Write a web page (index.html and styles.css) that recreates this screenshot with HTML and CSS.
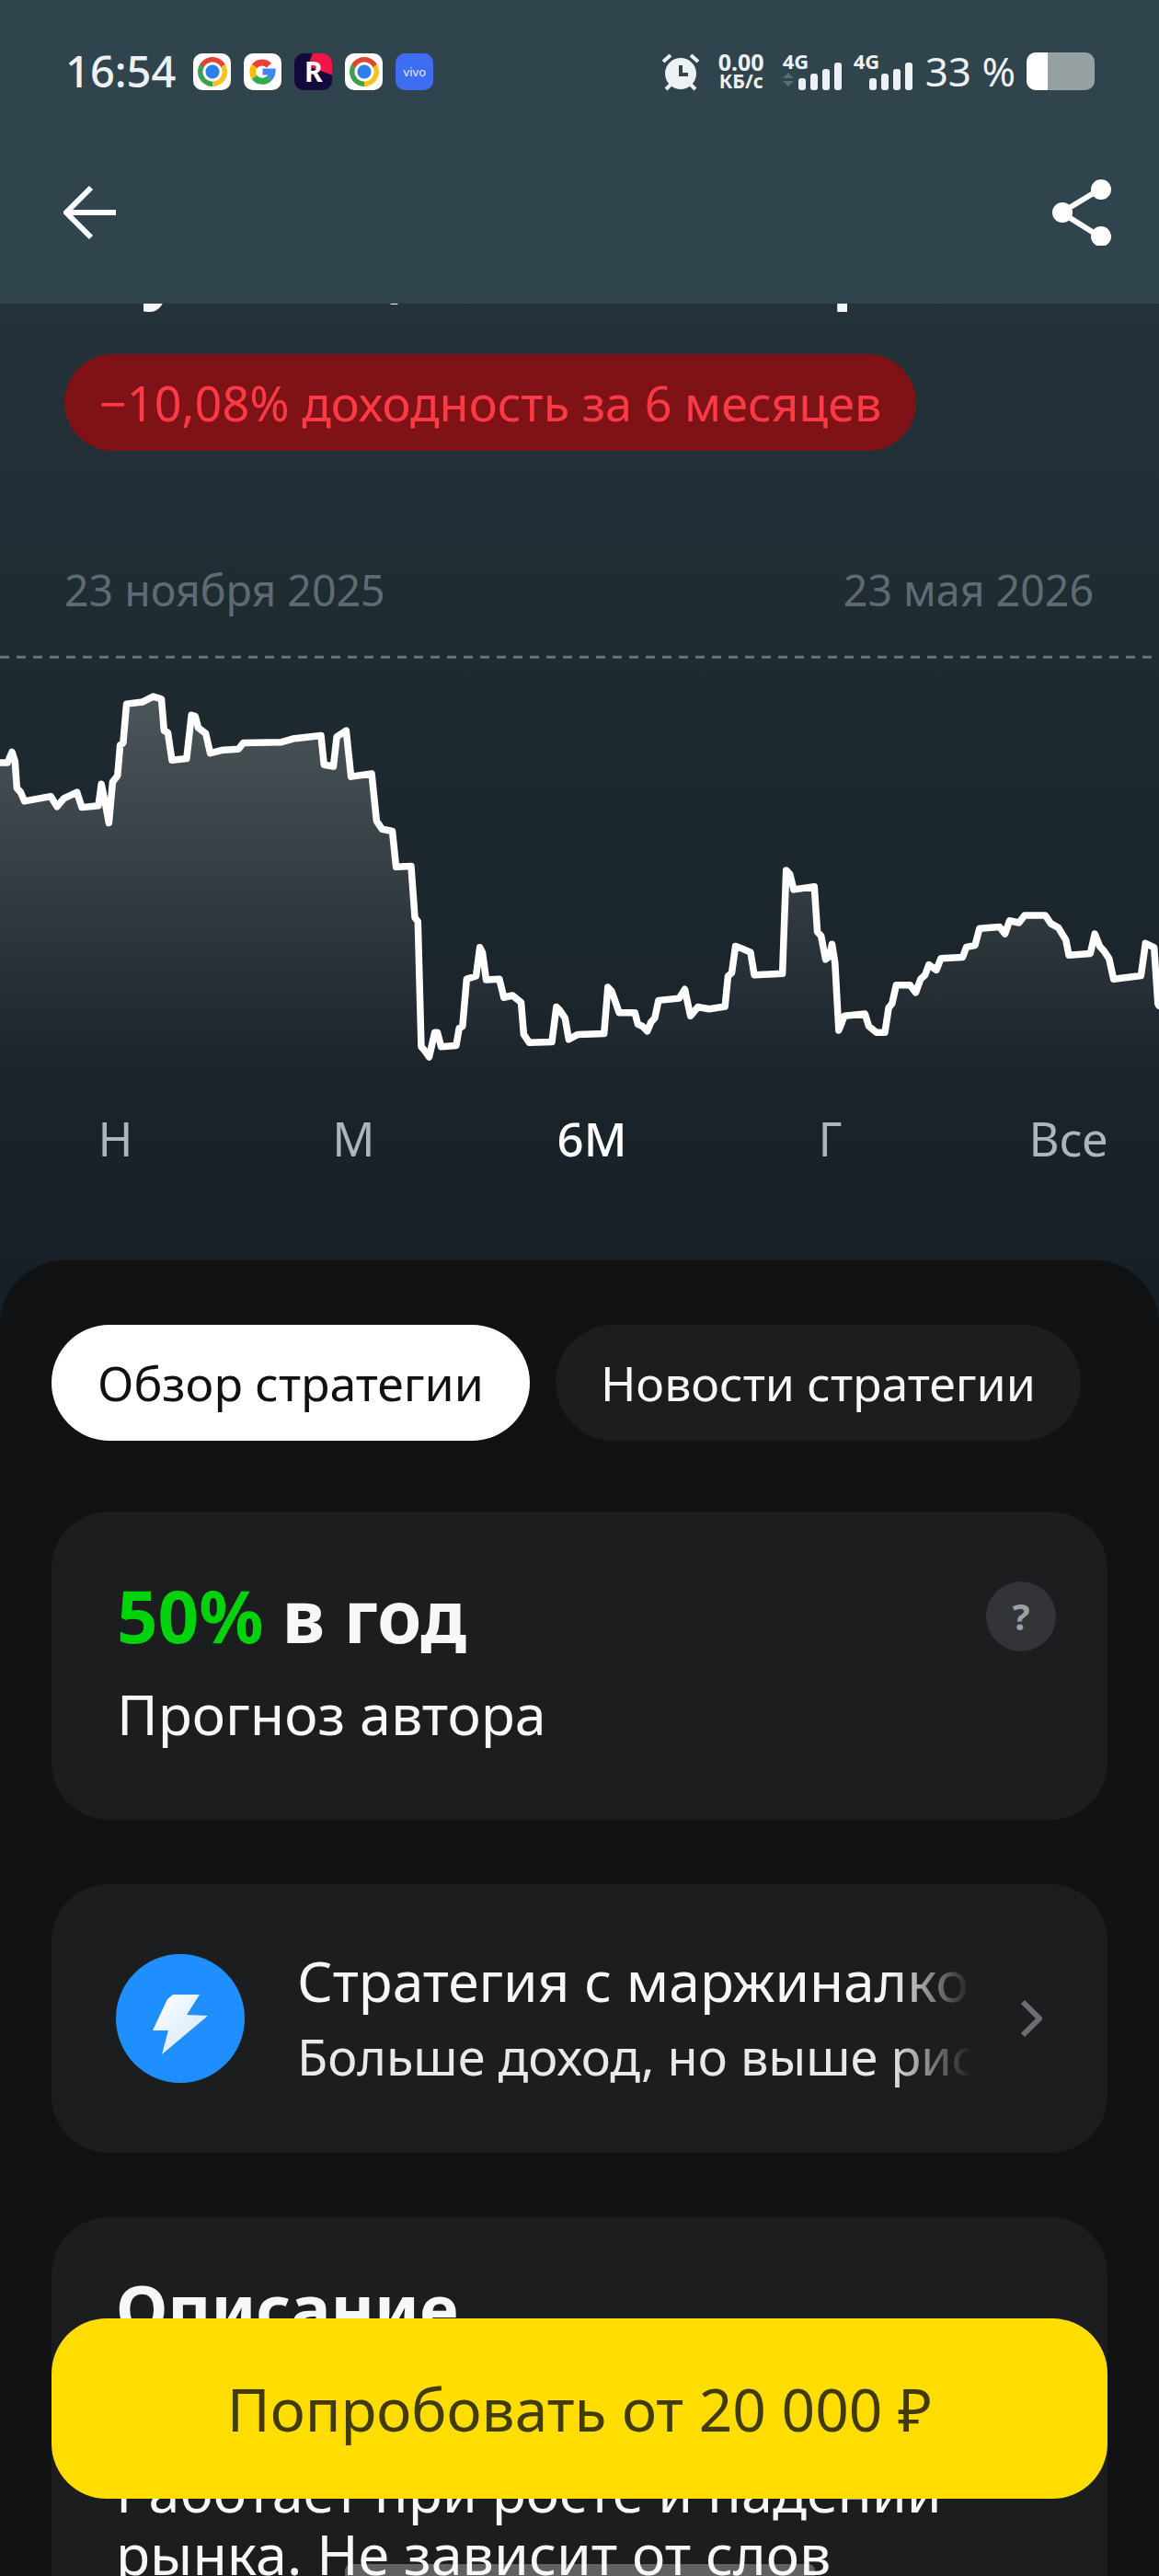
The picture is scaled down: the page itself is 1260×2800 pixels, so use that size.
FILE: index.html
```html
<!DOCTYPE html>
<html lang="ru">
<head>
    <meta charset="utf-8">
    <title>Стратегия</title>
    <link rel="stylesheet" href="styles.css">
</head>
<body>
<div class="app">

    <header class="top">
        <div class="status">
            <span class="time">16:54</span>
            <div class="notif">
                <span class="nicon chrome"><i></i></span>
                <span class="nicon">
                    <svg width="41" height="40" viewBox="0 0 41 40" fill="none" stroke-width="7">
                        <path d="M27.5 13.2A10.5 10.5 0 0 0 11.6 14" stroke="#ea4335"/>
                        <path d="M11.6 14A10.5 10.5 0 0 0 11.6 26" stroke="#fbbc05"/>
                        <path d="M11.6 26A10.5 10.5 0 0 0 27.8 27" stroke="#34a853"/>
                        <path d="M27.8 27A10.5 10.5 0 0 0 31 20H20.500" stroke="#4285f4"/>
                    </svg>
                </span>
                <span class="nicon rstore"><b>R</b></span>
                <span class="nicon chrome"><i></i></span>
                <span class="nicon vivo">vivo</span>
            </div>
            <div class="sys">
                <svg class="alarm" width="42" height="42" viewBox="0 0 42 42">
                    <circle cx="21" cy="23" r="17" fill="#eef1f3"/>
                    <path d="M21 14v10h8" fill="none" stroke="#2f444c" stroke-width="4"/>
                    <path d="M2 10l8-7M40 10l-8-7M5 40l5-5M37 40l-5-5" stroke="#eef1f3" stroke-width="4"/>
                </svg>
                <div class="speed"><b>0.00</b><b>КБ/с</b></div>
                <div class="net">
                    <b>4G</b>
                    <svg width="64" height="30" viewBox="0 0 64 30">
                        <path d="M0 17l6-6 6 6zM0 20l6 6 6-6z" fill="#5b6d73"/>
                        <rect x="17" y="17" width="8" height="13" rx="3" fill="#eef1f3"/>
                        <rect x="30" y="12" width="8" height="18" rx="3" fill="#eef1f3"/>
                        <rect x="43" y="7" width="8" height="23" rx="3" fill="#eef1f3"/>
                        <rect x="56" y="0" width="8" height="30" rx="3" fill="#eef1f3"/>
                    </svg>
                </div>
                <div class="net net2">
                    <b>4G</b>
                    <svg width="47" height="30" viewBox="0 0 47 30">
                        <rect x="0" y="17" width="8" height="13" rx="3" fill="#eef1f3"/>
                        <rect x="13" y="12" width="8" height="18" rx="3" fill="#eef1f3"/>
                        <rect x="26" y="7" width="8" height="23" rx="3" fill="#eef1f3"/>
                        <rect x="39" y="0" width="8" height="30" rx="3" fill="#eef1f3"/>
                    </svg>
                </div>
                <span class="pct">33 %</span>
                <div class="batt"><div class="batt-lvl"></div></div>
            </div>
        </div>
        <nav class="nav">
            <svg width="60" height="60" viewBox="0 0 60 60" fill="none" stroke="#fff" stroke-width="6">
                <path d="M57 30H3M30 3L3 30l27 27"/>
            </svg>
            <svg width="66" height="72" viewBox="0 0 66 72" fill="#fff" stroke="#fff" stroke-width="6">
                <path d="M53 10L10 36l43 27" fill="none"/>
                <circle cx="53" cy="11" r="8"/>
                <circle cx="11" cy="36" r="8"/>
                <circle cx="53" cy="62" r="8"/>
            </svg>
        </nav>
    </header>

    <section class="hero">
        <h1 class="title">Таунсити, миллионер</h1>
        <div class="yield">−10,08% доходность за 6 месяцев</div>
        <div class="dates">
            <span>23 ноября 2025</span>
            <span>23 мая 2026</span>
        </div>
        <svg class="chart" width="1260" height="490" viewBox="0 224 3087 1098" preserveAspectRatio="none">
            <defs>
                <linearGradient id="area" gradientUnits="userSpaceOnUse" x1="0" y1="350" x2="0" y2="1270">
                    <stop offset="0" stop-color="#fff" stop-opacity=".2"/>
                    <stop offset="1" stop-color="#fff" stop-opacity="0"/>
                </linearGradient>
            </defs>
            <path class="dash" d="M0 256H3087"/>
            <path fill="url(#area)" d="M0 513L20 513 32 487 40 510 45 575 55 585 65 607 135 595 152 620 170 600 205 585 218 622 262 618 270 565 280 610 290 660 300 560 313 545 320 470 328 465 337 370 380 365 408 352 430 358 437 435 447 440 458 507 497 503 510 397 520 400 528 428 548 442 560 490 595 482 635 480 648 465 750 463 780 455 855 447 863 518 888 522 897 450 922 435 935 547 990 540 1003 655 1018 675 1045 680 1055 767 1095 765 1105 890 1113 900 1122 1205 1130 1213 1143 1230 1158 1170 1165 1170 1175 1205 1215 1202 1223 1160 1232 1155 1243 1040 1268 1033 1278 963 1285 975 1295 1042 1330 1040 1342 1085 1365 1080 1388 1097 1395 1175 1410 1195 1470 1193 1482 1108 1490 1115 1505 1135 1515 1187 1539 1175 1609 1173 1619 1060 1629 1070 1639 1095 1649 1122 1691 1122 1699 1150 1711 1155 1724 1167 1734 1145 1744 1135 1754 1092 1809 1087 1824 1065 1839 1130 1859 1108 1889 1113 1931 1107 1939 1033 1949 1025 1959 960 1974 965 1999 975 2009 1030 2084 1027 2094 775 2104 785 2114 822 2169 815 2177 925 2187 935 2199 992 2209 985 2216 955 2224 1000 2234 1165 2249 1130 2304 1125 2314 1155 2334 1170 2357 1170 2367 1110 2376 1100 2387 1055 2424 1055 2439 1073 2452 1040 2464 1030 2474 1005 2494 1018 2506 990 2564 987 2574 962 2597 958 2609 917 2662 913 2677 930 2689 898 2714 903 2729 885 2784 885 2799 905 2819 915 2839 945 2847 982 2904 978 2916 930 2929 960 2939 970 2954 990 2966 1040 3039 1032 3051 953 3074 963 3084 1100 3087 1105L3087 1322 0 1322Z"/>
            <path class="line" d="M0 513L20 513 32 487 40 510 45 575 55 585 65 607 135 595 152 620 170 600 205 585 218 622 262 618 270 565 280 610 290 660 300 560 313 545 320 470 328 465 337 370 380 365 408 352 430 358 437 435 447 440 458 507 497 503 510 397 520 400 528 428 548 442 560 490 595 482 635 480 648 465 750 463 780 455 855 447 863 518 888 522 897 450 922 435 935 547 990 540 1003 655 1018 675 1045 680 1055 767 1095 765 1105 890 1113 900 1122 1205 1130 1213 1143 1230 1158 1170 1165 1170 1175 1205 1215 1202 1223 1160 1232 1155 1243 1040 1268 1033 1278 963 1285 975 1295 1042 1330 1040 1342 1085 1365 1080 1388 1097 1395 1175 1410 1195 1470 1193 1482 1108 1490 1115 1505 1135 1515 1187 1539 1175 1609 1173 1619 1060 1629 1070 1639 1095 1649 1122 1691 1122 1699 1150 1711 1155 1724 1167 1734 1145 1744 1135 1754 1092 1809 1087 1824 1065 1839 1130 1859 1108 1889 1113 1931 1107 1939 1033 1949 1025 1959 960 1974 965 1999 975 2009 1030 2084 1027 2094 775 2104 785 2114 822 2169 815 2177 925 2187 935 2199 992 2209 985 2216 955 2224 1000 2234 1165 2249 1130 2304 1125 2314 1155 2334 1170 2357 1170 2367 1110 2376 1100 2387 1055 2424 1055 2439 1073 2452 1040 2464 1030 2474 1005 2494 1018 2506 990 2564 987 2574 962 2597 958 2609 917 2662 913 2677 930 2689 898 2714 903 2729 885 2784 885 2799 905 2819 915 2839 945 2847 982 2904 978 2916 930 2929 960 2939 970 2954 990 2966 1040 3039 1032 3051 953 3074 963 3084 1100 3087 1105"/>
        </svg>
        <div class="ranges">
            <span>Н</span>
            <span>М</span>
            <span class="active">6М</span>
            <span>Г</span>
            <span>Все</span>
        </div>
    </section>

    <main class="panel">
        <div class="tabs">
            <div class="tab selected">Обзор стратегии</div>
            <div class="tab">Новости стратегии</div>
        </div>

        <div class="card forecast">
            <div class="forecast-head">
                <div class="forecast-val"><em>50%</em> в год</div>
                <span class="help">?</span>
            </div>
            <div class="forecast-sub">Прогноз автора</div>
        </div>

        <div class="card margin">
            <svg class="bolt" width="140" height="140" viewBox="126 2124 140 140">
                <defs>
                    <linearGradient id="boltfill" x1="0" y1="0" x2="1" y2="1">
                        <stop offset="0" stop-color="#fff"/>
                        <stop offset="1" stop-color="#cfe4fb"/>
                    </linearGradient>
                </defs>
                <circle cx="196" cy="2194" r="70" fill="#1f8fff"/>
                <path d="M188 2168H217L203 2190 226 2191 176 2233 183 2207H166L182 2173Z" fill="url(#boltfill)"/>
            </svg>
            <div class="margin-text">
                <div class="margin-title">Стратегия с маржиналкой</div>
                <div class="margin-sub">Больше доход, но выше риск</div>
            </div>
            <svg class="chevron" width="24" height="42" viewBox="0 0 24 42" fill="none" stroke="#6b6d70" stroke-width="6">
                <path d="M3 3l18 18L3 39"/>
            </svg>
        </div>

        <div class="card descr">
            <h2 class="descr-title">Описание</h2>
            <p class="descr-text">Работает при росте и падении<br>рынка. Не зависит от слов</p>
        </div>
    </main>

    <button class="cta">Попробовать от 20 000 ₽</button>
    <div class="home"></div>
</div>
</body>
</html>
```

FILE: styles.css
```css
* {
    box-sizing: border-box;
}
body {
    margin: 0;
    font-family: "Noto Sans", "Open Sans", sans-serif;
    color: #f6f7f8;
}
.app {
    position: relative;
    width: 1260px;
    height: 2800px;
    overflow: hidden;
    background: linear-gradient(#24323a 330px, #1f2b31 700px, #172026 1400px);
}

/* top bar */
.top {
    position: absolute;
    left: 0;
    top: 0;
    width: 100%;
    height: 330px;
    padding-top: 57px;
    background: #2f444c;
    z-index: 2;
}
.status {
    display: flex;
    align-items: center;
    height: 41px;
    padding: 0 70px 0 71px;
    color: #eef1f3;
}
.time {
    font-size: 47px;
    font-weight: 500;
    line-height: 41px;
}
.notif {
    display: flex;
    gap: 14px;
    margin-left: 19px;
}
.nicon {
    display: block;
    position: relative;
    width: 41px;
    height: 40px;
    border-radius: 10px;
    background: #fff;
    overflow: hidden;
}
.nicon svg {
    display: block;
}
.chrome {
    display: flex;
    align-items: center;
    justify-content: center;
}
.chrome i {
    display: block;
    width: 32px;
    height: 32px;
    border-radius: 50%;
    background:
        radial-gradient(circle, #2f7fe8 0 7px, #fff 8px 10px, transparent 11px),
        conic-gradient(from 60deg, #f6c21c 0 120deg, #3ba14f 120deg 240deg, #e2442f 240deg 360deg);
}
.rstore {
    background: #120a3c;
    text-align: center;
}
.rstore::before {
    content: "";
    position: absolute;
    right: -8px;
    top: -10px;
    width: 30px;
    height: 30px;
    background: #ee1747;
    transform: rotate(20deg);
}
.rstore b {
    position: relative;
    font-size: 30px;
    line-height: 40px;
    color: #fff;
}
.vivo {
    background: #3f6df2;
    color: #e6ecff;
    font-size: 13px;
    line-height: 40px;
    text-align: center;
}
.sys {
    display: flex;
    align-items: center;
    margin-left: auto;
}
.alarm {
    display: block;
}
.speed {
    display: flex;
    flex-direction: column;
    align-items: center;
    margin-left: 20px;
    font-size: 25px;
    line-height: 21px;
}
.speed b:last-child {
    font-size: 21px;
}
.net {
    position: relative;
    width: 64px;
    height: 41px;
    margin-left: 20px;
}
.net b {
    position: absolute;
    left: 0;
    top: -1px;
    font-size: 22px;
    line-height: 20px;
}
.net svg {
    position: absolute;
    right: 0;
    bottom: 0;
}
.net2 {
    margin-left: 13px;
}
.pct {
    margin-left: 14px;
    font-size: 44px;
    line-height: 41px;
}
.batt {
    width: 74px;
    height: 41px;
    margin-left: 12px;
    background: #97a0a2;
    border-radius: 10px;
    overflow: hidden;
}
.batt-lvl {
    width: 23px;
    height: 100%;
    background: #fff;
}
.nav {
    display: flex;
    align-items: center;
    justify-content: space-between;
    height: 72px;
    margin-top: 97px;
    padding: 0 50px 0 69px;
}

/* chart part */
.hero {
    padding-top: 249px;
}
.title {
    margin: 0 0 0 70px;
    font-size: 72px;
    font-weight: 700;
    line-height: 90px;
    letter-spacing: 1.5px;
    word-spacing: 47px;
    white-space: nowrap;
}
.yield {
    display: inline-block;
    margin: 46px 0 0 70px;
    height: 105px;
    padding: 0 38px;
    border-radius: 53px;
    background: #7e1217;
    color: #ff3a44;
    font-size: 52.2px;
    line-height: 105px;
}
.dates {
    display: flex;
    justify-content: space-between;
    margin-top: 119px;
    padding: 0 71px 0 70px;
    color: #5f6b72;
    font-size: 46.5px;
    line-height: 64px;
}
.chart {
    display: block;
    margin-top: 27px;
    overflow: hidden;
}
.dash {
    fill: none;
    stroke: #66757c;
    stroke-width: 3;
    stroke-dasharray: 10 8;
    vector-effect: non-scaling-stroke;
}
.line {
    fill: none;
    stroke: #fff;
    stroke-width: 7.5;
    stroke-linejoin: round;
    stroke-linecap: round;
    vector-effect: non-scaling-stroke;
}
.ranges {
    display: grid;
    grid-template-columns: repeat(5, 259px);
    margin: 17px 0 0 -4px;
    color: #aeb4b9;
    font-size: 51px;
    line-height: 60px;
    text-align: center;
}
.active {
    color: #fff;
    font-weight: 500;
}

/* dark sheet */
.panel {
    margin-top: 103px;
    padding: 70px 56px 0;
    background: #111213;
    border-radius: 70px 70px 0 0;
    height: 1430px;
}
.tabs {
    display: flex;
    gap: 28px;
}
.tab {
    height: 126px;
    padding: 0 49px;
    border-radius: 63px;
    background: #1c1d1f;
    font-size: 51.8px;
    line-height: 126px;
}
.selected {
    padding: 0 50px;
    background: #fff;
    color: #111;
}
.card {
    background: #1c1d1f;
    border-radius: 62px;
}
.forecast {
    height: 335px;
    margin-top: 77px;
    padding: 63px 56px 0 71px;
}
.forecast-head {
    display: flex;
    justify-content: space-between;
    align-items: flex-start;
}
.forecast-val {
    font-size: 78px;
    font-weight: 700;
    line-height: 100px;
}
.forecast-val em {
    font-style: normal;
    color: #00d20c;
}
.help {
    width: 76px;
    height: 76px;
    margin-top: 13px;
    border-radius: 50%;
    background: #333437;
    color: #9a9fa8;
    font-size: 40px;
    font-weight: 700;
    line-height: 76px;
    text-align: center;
}
.forecast-sub {
    font-size: 61px;
    line-height: 80px;
    margin-top: 17px;
}
.margin {
    display: flex;
    align-items: center;
    height: 292px;
    margin-top: 70px;
    padding: 0 71px 0 70px;
}
.bolt {
    flex: none;
}
.margin-text {
    width: 733px;
    margin-left: 57px;
    overflow: hidden;
    white-space: nowrap;
    -webkit-mask-image: linear-gradient(to right, #000 88%, transparent);
    mask-image: linear-gradient(to right, #000 88%, transparent);
}
.margin-title {
    font-size: 60.5px;
    line-height: 82px;
}
.margin-sub {
    font-size: 54px;
    line-height: 82px;
    color: #e8e9ea;
}
.chevron {
    margin-left: auto;
}
.descr {
    margin-top: 70px;
    height: 600px;
    padding: 48px 70px 0;
}
.descr-title {
    margin: 0;
    font-size: 72.5px;
    font-weight: 700;
    line-height: 100px;
}
.descr-text {
    margin: 116px 0 0;
    font-size: 61px;
    line-height: 68px;
    white-space: nowrap;
}

/* button + gesture bar over the sheet */
.cta {
    position: absolute;
    left: 56px;
    top: 2520px;
    width: 1148px;
    height: 196px;
    border: none;
    border-radius: 60px;
    background: #ffdd00;
    color: #413b0c;
    font-family: inherit;
    font-size: 64px;
}
.home {
    position: absolute;
    left: 375px;
    top: 2787px;
    width: 511px;
    height: 13px;
    background: rgba(255, 255, 255, .3);
    border-radius: 7px 7px 0 0;
}
```
